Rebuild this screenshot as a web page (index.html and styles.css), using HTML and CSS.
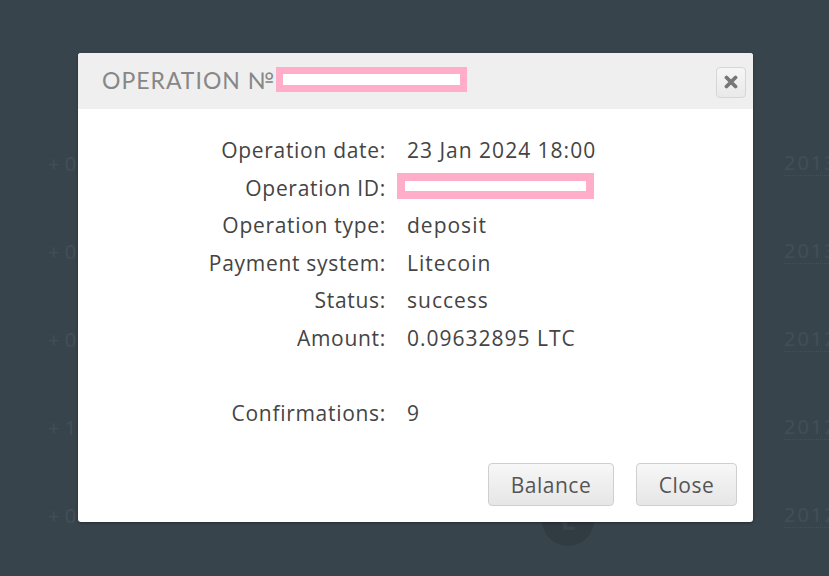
FILE: index.html
```html
<!DOCTYPE html>
<html>
<head>
<meta charset="utf-8">
<link rel="stylesheet" href="styles.css">
</head>
<body>
<div class="page">
  <div class="bg-list">
    <div class="bg-row"><span></span><span class="bg-amt">+ 0</span><span></span><span></span><span class="bg-date">2013</span></div>
    <div class="bg-row"><span></span><span class="bg-amt">+ 0</span><span></span><span></span><span class="bg-date">2013</span></div>
    <div class="bg-row"><span></span><span class="bg-amt">+ 0</span><span></span><span></span><span class="bg-date">2012</span></div>
    <div class="bg-row"><span></span><span class="bg-amt">+ 1</span><span></span><span></span><span class="bg-date">2012</span></div>
    <div class="bg-row"><span></span><span class="bg-amt">+ 0</span><span class="bg-coin">Ł</span><span></span><span class="bg-date">2012</span></div>
  </div>

  <div class="modal">
    <div class="modal-head">
      <span class="modal-title">OPERATION №</span>
      <span class="redact redact-title"></span>
      <button class="x-btn" aria-label="close">
        <svg width="14" height="14" viewBox="0 0 14 14"><path d="M2.5 2.5 L11.5 11.5 M11.5 2.5 L2.5 11.5" stroke="#777" stroke-width="3.8" stroke-linecap="round"/></svg>
      </button>
    </div>
    <div class="modal-body">
      <div class="info">
        <div class="lbl">Operation date:</div><div class="val">23 Jan 2024 18:00</div>
        <div class="lbl">Operation ID:</div><div class="val"><span class="redact redact-id"></span></div>
        <div class="lbl">Operation type:</div><div class="val">deposit</div>
        <div class="lbl">Payment system:</div><div class="val">Litecoin</div>
        <div class="lbl">Status:</div><div class="val">success</div>
        <div class="lbl">Amount:</div><div class="val">0.09632895 LTC</div>
        <div class="lbl"></div><div class="val"></div>
        <div class="lbl">Confirmations:</div><div class="val">9</div>
      </div>
      <div class="actions">
        <button class="btn btn-balance">Balance</button>
        <button class="btn btn-close">Close</button>
      </div>
    </div>
  </div>
</div>
</body>
</html>
```
FILE: styles.css
```css
html, body {
  margin: 0;
  padding: 0;
}
body {
  background: #38444c;
  font-family: "Open Sans", "Liberation Sans", sans-serif;
  width: 829px;
  height: 576px;
  overflow: hidden;
}
.page {
  position: relative;
  width: 829px;
  height: 576px;
}
.bg-list {
  padding-top: 119px;
}
.bg-row {
  display: grid;
  grid-template-columns: 48px 494px 52px 190px 1fr;
  height: 88px;
  align-items: center;
  color: #434f58;
  font-size: 20px;
  white-space: nowrap;
}
.bg-date {
  letter-spacing: 2px;
  border-bottom: 1px dotted #444f57;
  line-height: 24px;
  overflow: hidden;
}
.bg-coin {
  width: 52px;
  height: 52px;
  border-radius: 50%;
  background: #303b42;
  color: #38444c;
  font-weight: 700;
  font-size: 26px;
  display: flex;
  align-items: center;
  justify-content: center;
  margin-top: 10px;
}
.modal {
  position: absolute;
  left: 78px;
  top: 53px;
  width: 675px;
  height: 469px;
  background: #fff;
  border-radius: 3px;
  box-shadow: 0 1px 3px rgba(0,0,0,0.35);
  display: flex;
  flex-direction: column;
  overflow: hidden;
}
.modal-head {
  height: 56px;
  background: #efefef;
  display: flex;
  align-items: center;
  padding-left: 24px;
  padding-right: 7px;
}
.modal-title {
  font-family: "Lato", "Liberation Sans", sans-serif;
  font-size: 23px;
  letter-spacing: 1px;
  color: #878787;
  margin-top: -3px;
}
.redact {
  display: inline-block;
  box-sizing: border-box;
  border: 7px solid #ffadc8;
  background: #fff;
}
.redact-title {
  width: 191px;
  height: 25px;
  margin-left: 1px;
  margin-top: -3px;
}
.x-btn {
  margin-left: auto;
  width: 30px;
  height: 31px;
  border: 1px solid #d6d6d6;
  border-radius: 4px;
  background: linear-gradient(#f6f6f6, #e9e9e9);
  display: flex;
  align-items: center;
  justify-content: center;
  padding: 0;
  margin-top: 2px;
}
.modal-body {
  flex: 1;
  display: flex;
  flex-direction: column;
  padding: 23px 16px 16px 0;
}
.info {
  display: grid;
  grid-template-columns: 307px 1fr;
  column-gap: 22px;
  font-size: 21px;
  letter-spacing: 0.7px;
  line-height: 37.5px;
  color: #444;
}
.lbl {
  text-align: right;
  height: 37.5px;
  margin-right: -1px;
}
.val {
  height: 37.5px;
  display: flex;
  align-items: center;
  letter-spacing: 1px;
}
.redact-id {
  width: 197px;
  height: 26px;
  border-width: 8px;
  margin-left: -10px;
  margin-top: -4px;
}
.actions {
  margin-top: auto;
  display: flex;
  justify-content: flex-end;
  gap: 22px;
}
.btn {
  height: 43px;
  border: 1px solid #cfcfcf;
  border-radius: 4px;
  background: linear-gradient(#f7f7f7, #e6e6e6);
  font-family: "Open Sans", "Liberation Sans", sans-serif;
  font-size: 21px;
  letter-spacing: 0.5px;
  color: #555;
  padding: 0;
}
.btn-balance { width: 126px; }
.btn-close { width: 101px; }
```
